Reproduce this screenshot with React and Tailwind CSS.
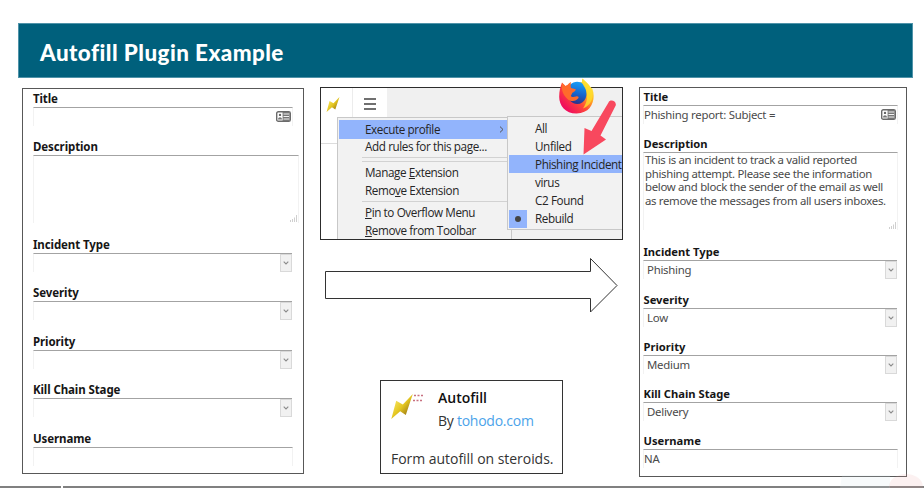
import React from 'react';

const leftFields = [
  { label: 'Title', kind: 'card', box: 'h-[48.4px]' },
  { label: 'Description', kind: 'area', box: 'h-[97.4px] mr-[-6px]' },
  { label: 'Incident Type', kind: 'select', box: 'h-[48.5px]' },
  { label: 'Severity', kind: 'select', box: 'h-[48.5px]' },
  { label: 'Priority', kind: 'select', box: 'h-[48.5px]' },
  { label: 'Kill Chain Stage', kind: 'select', box: 'h-[48.5px]' },
  { label: 'Username', kind: 'text', box: 'h-[36px]' },
];

const rightFields = [
  { label: 'Title', kind: 'card', value: 'Phishing report: Subject =', box: 'h-[47.3px]' },
  { label: 'Description', kind: 'area', box: 'h-[108px]', lines: [
    'This is an incident to track a valid reported',
    'phishing attempt. Please see the information',
    'below and block the sender of the email as well',
    'as remove the messages from all users inboxes.',
  ] },
  { label: 'Incident Type', kind: 'select', value: 'Phishing', box: 'h-[47.3px]' },
  { label: 'Severity', kind: 'select', value: 'Low', box: 'h-[47.3px]' },
  { label: 'Priority', kind: 'select', value: 'Medium', box: 'h-[47.3px]' },
  { label: 'Kill Chain Stage', kind: 'select', value: 'Delivery', box: 'h-[47.3px]' },
  { label: 'Username', kind: 'text', value: 'NA', box: 'h-[36px]' },
];

function ContactCard() {
  return (
    <svg className="h-[11px] w-[15px]" viewBox="0 0 15 11">
      <rect x="0.7" y="0.7" width="13.6" height="9.6" rx="1.6" fill="#fff" stroke="#6a6a6a" strokeWidth="1.4" />
      <rect x="6.6" y="1" width="7" height="9" fill="#777" />
      <path d="M7.5 3h5.5M7.5 5.5h5.5M7.5 8h5.5" stroke="#f4f4f4" strokeWidth="1" />
      <circle cx="4" cy="3.9" r="1.2" fill="#666" />
      <path d="M2 8.4c0-3 4-3 4 0z" fill="#777" />
    </svg>
  );
}

function Grip() {
  return (
    <svg className="h-[7px] w-[7px]" viewBox="0 0 7 7">
      <path d="M0.5 5v2M2.5 4v3M4.5 2.5v4.5M6.5 0v7" stroke="#cfcfcf" strokeWidth="1" />
    </svg>
  );
}

function Field({ field, labelClass }) {
  const select = field.kind === 'select';
  const area = field.kind === 'area';
  return (
    <div className={`${field.box} flex shrink-0 flex-col`}>
      <div className={`h-[17px] shrink-0 whitespace-nowrap font-['Noto_Sans',sans-serif] font-bold leading-[17px] text-[#161616] ${labelClass}`}>
        {field.label}
      </div>
      <div
        className={`flex justify-between border-t border-l border-t-[#a3a3a3] border-l-[#f2f2f2] font-['Noto_Sans',sans-serif] text-[11.4px] tracking-[-0.25px] text-[#4a4a4a] ${
          area ? 'mb-[13px] grow' : 'h-[19px]'
        } ${select ? 'mr-px' : 'border-r border-r-[#f2f2f2]'}`}
      >
        {area ? (
          <div className="pl-px tracking-[-0.32px]">
            {(field.lines || []).map((line) => (
              <div key={line} className="h-[13.6px] whitespace-nowrap leading-[14px]">{line}</div>
            ))}
          </div>
        ) : (
          <span className={`whitespace-nowrap leading-[18px] ${select ? 'pl-[3px]' : ''}`}>{field.value}</span>
        )}
        {select && (
          <span className="flex h-[18px] w-[12px] items-center justify-center border border-[#d9d9d9] bg-[#f1f1f1]">
            <svg className="h-[4px] w-[6px]" viewBox="0 0 6 4">
              <path d="M0.7 0.7L3 3L5.3 0.7" fill="none" stroke="#8b8b8b" strokeWidth="1.1" />
            </svg>
          </span>
        )}
        {field.kind === 'card' && <span className="pt-[3px] pr-px"><ContactCard /></span>}
        {area && <span className="-ml-2 flex items-end pr-px pb-px"><Grip /></span>}
      </div>
    </div>
  );
}

function Bolt({ className }) {
  return (
    <svg className={className} viewBox="0 0 22 25">
      <defs>
        <linearGradient id="bolt" x1="0" y1="0" x2="1" y2="1">
          <stop offset="0.15" stopColor="#f7e767" />
          <stop offset="0.5" stopColor="#e4c620" />
          <stop offset="0.75" stopColor="#a98717" />
        </linearGradient>
      </defs>
      <path d="M0.3 25L5.200 6.800L11.800 10.500L21.800 0L14.800 21L9.200 17.200Z" fill="url(#bolt)" />
    </svg>
  );
}

function Firefox() {
  return (
    <svg className="absolute top-[-10px] left-[237px] h-[36px] w-[37px]" viewBox="0 0 37 36">
      <defs>
        <linearGradient id="fox" x1="0.85" y1="0.1" x2="0.15" y2="0.8">
          <stop offset="0" stopColor="#fff04a" />
          <stop offset="0.3" stopColor="#ffb020" />
          <stop offset="0.6" stopColor="#ff4a38" />
          <stop offset="1" stopColor="#f0105c" />
        </linearGradient>
        <linearGradient id="globe" x1="0.6" y1="0" x2="0.4" y2="1">
          <stop offset="0" stopColor="#18a0f8" />
          <stop offset="0.55" stopColor="#1763cc" />
          <stop offset="1" stopColor="#2f2f86" />
        </linearGradient>
      </defs>
      <path d="M4 4.500L7.500 8C9 7 11 6.500 12.500 6.500L24 4C24 2 24 1.500 24.500 0.500C26.500 3 31 6 32.500 9L34.500 11C38 21 34 35.300 18.500 35.500C7 35.500 1 27 1.200 18.500C1.200 13 2.500 8 4 4.500Z" fill="url(#fox)" />
      <path d="M12 7C16 2.500 22 3 25 6C28.500 10 29.500 16 27.500 20.500C25 27 16 28 11.500 22L9 14Z" fill="url(#globe)" />
      <path d="M4.300 5.200L7.800 8.500C9.500 7.500 10.500 5 13 4C12.500 6.500 12.500 8 13 10L17.800 11.200C17.300 14 14 14 13.800 16L12.800 18C14 19.500 16 19 18 18.500C20 18 21 19 20.500 20C18 23.500 13.500 24 10 21.500C6 18 2.500 12 4.300 5.200Z" fill="#ff6b2b" />
      <path d="M24.500 0.800C28 4 36 11 34.500 19C33.500 25 29 29 25 30.500C29 25 30.500 18 27.500 11C26 8 23 5 24.500 0.800Z" fill="#ffdf2c" opacity="0.8" />
    </svg>
  );
}

function MenuItem({ children, className = '' }) {
  return <div className={`flex h-[18.1px] shrink-0 items-center whitespace-nowrap pl-[26px] ${className}`}>{children}</div>;
}

function ExtensionMenu() {
  return (
    <section className="relative h-[153px] w-[303px] border border-[#2c2c2c] bg-white font-['Open_Sans',sans-serif] text-[11.7px] tracking-[-0.4px] text-[#252525]">
      <div className="h-full overflow-hidden">
        <div className="flex h-[29px]">
          <div className="flex w-[32px] items-center border-r border-[#ececec] pt-[3px] pl-[5px]">
            <Bolt className="h-[15px] w-[14px]" />
          </div>
          <div className="flex w-[34px] flex-col items-center justify-center gap-[3px] pt-[3px]">
            <span className="h-[2px] w-[12px] bg-[#707070]" />
            <span className="h-[2px] w-[12px] bg-[#707070]" />
            <span className="h-[2px] w-[12px] bg-[#707070]" />
          </div>
          <div className="grow bg-[#f0f0f0]" />
        </div>
        <div className="flex">
          <div className="h-[27px] w-[16px] border-b border-[#dcdcdc]" />
          <div className="flex h-[126px] w-[175px] flex-col border-t border-l border-r border-[#c8c8c8] bg-[#f2f2f2] pt-[2px] pl-px">
            <MenuItem className="h-[18.6px] bg-[#92b4fc]">
              Execute profile
              <svg className="ml-auto mr-[7px] h-[7px] w-[5px]" viewBox="0 0 5 7">
                <path d="M1 0.600L4 3.500L1 6.400" fill="none" stroke="#555" />
              </svg>
            </MenuItem>
            <MenuItem className="pb-px">Add rules for this page...</MenuItem>
            <div className="ml-[23px] h-[5px] shrink-0 border-t border-b border-[#d2d2d2]" />
            <MenuItem className="mt-[2px]"><span>Manage <u>E</u>xtension</span></MenuItem>
            <MenuItem><span>Remo<u>v</u>e Extension</span></MenuItem>
            <div className="mt-px ml-[23px] h-[2.5px] shrink-0 border-t border-[#d2d2d2]" />
            <MenuItem><span><u>P</u>in to Overflow Menu</span></MenuItem>
            <MenuItem><span><u>R</u>emove from Toolbar</span></MenuItem>
          </div>
          <div className="h-[126px] grow bg-[#f0f0f0]" />
        </div>
      </div>
      <div className="absolute top-[28px] left-[186px] h-[114px] w-[115px] border-t border-b border-l border-[#c8c8c8] bg-[#f2f2f2] pt-[2px] pl-px">
        <MenuItem className="pt-px">All</MenuItem>
        <MenuItem className="pt-px">Unfiled</MenuItem>
        <MenuItem className="bg-[#92b4fc] pt-px">Phishing Incident</MenuItem>
        <MenuItem>virus</MenuItem>
        <MenuItem>C2 Found</MenuItem>
        <div className="flex h-[18.1px] items-center">
          <span className="flex h-[18px] w-[18px] items-center justify-center bg-[#92b4fc]">
            <span className="h-[6px] w-[6px] rounded-full bg-[#444]" />
          </span>
          <span className="pl-[8px]">Rebuild</span>
        </div>
      </div>
      <Firefox />
      <svg className="absolute top-[11px] left-[260px] h-[56px] w-[36px]" viewBox="0 0 36 56">
        <path d="M27.500 3.500C29 -0.500 36 2 34.700 6.500L19.500 36.500L25 40.500L2.500 55.500L3.500 29L10.500 32Z" fill="#f8485e" />
      </svg>
    </section>
  );
}

export default function App() {
  return (
    <div className="relative flex h-[488px] w-[924px] flex-col overflow-hidden bg-white">
      <header className="mt-[23px] ml-[18px] flex h-[55px] w-[895px] shrink-0 items-center border border-[#4f93a9] bg-[#00607c] pl-[21px]">
        <h1 className="whitespace-nowrap pt-[6px] font-['Lato',sans-serif] text-[22.4px] font-black leading-none tracking-[0.45px] text-white">
          Autofill Plugin Example
        </h1>
      </header>
      <main className="flex h-[408px] shrink-0 items-start pt-[9px] pl-[22px]">
        <section className="mt-px h-[386px] w-[282px] shrink-0 border border-[#585858] pt-px pr-[10px] pl-[10px]">
          {leftFields.map((field) => (
            <Field key={field.label} field={field} labelClass="text-[11.5px] tracking-[-0.1px]" />
          ))}
        </section>
        <div className="ml-[16px] flex w-[303px] shrink-0 flex-col items-start">
          <ExtensionMenu />
          <svg className="mt-[17px] ml-[5px] h-[56px] w-[293px]" viewBox="0 0 293 56">
            <path d="M0.500 14.500H265.500V1.500L292 28.500L265.500 55V41.500H0.500Z" fill="#fff" stroke="#333" strokeWidth="1" />
          </svg>
          <section className="mt-[67px] ml-[60px] h-[94px] w-[183px] border border-[#333] pl-[10px] font-['Open_Sans',sans-serif] text-[14px] text-[#333]">
            <div className="flex h-[62px]">
              <div className="flex w-[47px] pt-[13px]">
                <Bolt className="h-[25px] w-[22px]" />
                <svg className="h-[8px] w-[10px]" viewBox="0 0 10 8">
                  <path d="M1 1.500h2M4.500 1.500h2M8 1.500h2M0 6.500h2M3.500 6.500h2M7 6.500h2" stroke="#c87080" strokeWidth="1.4" />
                </svg>
              </div>
              <div className="whitespace-nowrap pt-[5px] leading-[23px]">
                <div className="font-semibold text-[#111]">Autofill</div>
                <div className="tracking-[-0.25px]">By <span className="text-[#4ba3ea]">tohodo.com</span></div>
              </div>
            </div>
            <div className="whitespace-nowrap pt-[5px] leading-[22px] tracking-[-0.04px]">Form autofill on steroids.</div>
          </section>
        </div>
        <section className="ml-[16px] h-[390px] w-[268px] shrink-0 border border-[#585858] pr-[8px] pl-[3px]">
          {rightFields.map((field) => (
            <Field key={field.label} field={field} labelClass="text-[11.2px] pl-[0.5px]" />
          ))}
        </section>
      </main>
      <footer className="flex h-[2px] shrink-0 gap-[2px]">
        <span className="w-[61px] bg-[#808080]" />
        <span className="grow bg-[#808080]" />
      </footer>
      <svg className="absolute right-0 bottom-0 h-[15px] w-[84px]" viewBox="0 0 84 15">
        <path d="M2 2H50V15H0Z" fill="#d5e5e8" opacity="0.18" />
        <ellipse cx="66" cy="14" rx="17" ry="13" fill="#e9a0a0" opacity="0.15" />
      </svg>
    </div>
  );
}
